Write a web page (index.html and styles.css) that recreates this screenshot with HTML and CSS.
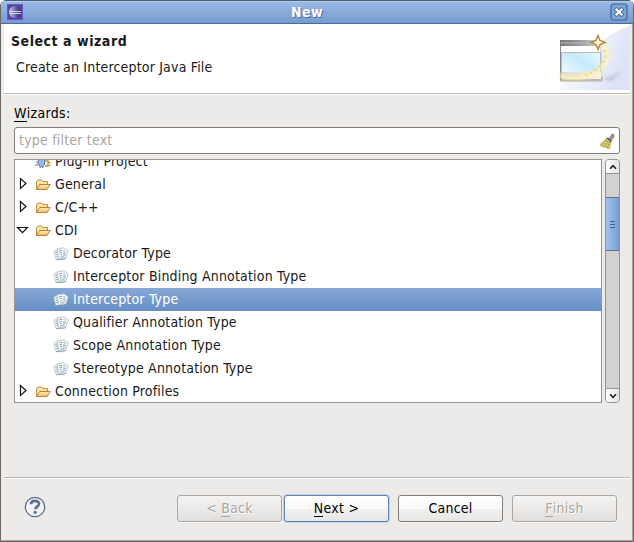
FILE: index.html
```html
<!DOCTYPE html>
<html lang="en">
<head>
<meta charset="utf-8">
<title>New</title>
<link rel="stylesheet" href="styles.css">
</head>
<body>
<svg class="defs" width="0" height="0" aria-hidden="true">
  <defs>
    <linearGradient id="fold" x1="0" y1="0" x2="0" y2="1"><stop offset="0" stop-color="#fff3c4"/><stop offset="1" stop-color="#f0b75c"/></linearGradient>
    <symbol id="folder" viewBox="0 0 16 16">
      <path d="M1.500 12.500V4.500L3 3h3.500L8 4.500h4.500V7" fill="#fbe3a4" stroke="#c08c48"/>
      <path d="M1.500 12.500L4.600 7.500H15.200L12 12.500Z" fill="url(#fold)" stroke="#bd7f33" stroke-linejoin="round"/>
    </symbol>
    <symbol id="pages" viewBox="0 0 16 16">
      <path d="M.8 5.200L4.500 3.300 7.500 13 3 13.600z" fill="#edf3f5" stroke="#b5c6cf" stroke-width=".8"/>
      <path d="M4.200 2.800L11 1.800l4.200 3-2.400 7.400-7.200.5z" fill="#f8fbfc" stroke="#a9bbc5" stroke-width=".8"/>
      <path d="M3 13.600l7.500 0 2.500-1.400" fill="none" stroke="#8199a6" stroke-width=".8"/>
      <path d="M6 4.800l3-.5M10.500 4.500l2 .8M6.500 6.800l2.500-.3M10 7l3 .4M7 8.900l2-.2M10 9l2.300.3M7.300 10.900h4M2.500 6.500l1.500-.5M3 8.500l1.500-.4M3.500 10.700l1.500-.3" stroke="#8298a5" stroke-width=".9"/>
    </symbol>
    <symbol id="closed" viewBox="0 0 9 13"><path d="M1.500 1.500v10L7 6.500z" fill="#fff" stroke="#111" stroke-width="1.200"/></symbol>
    <symbol id="open" viewBox="0 0 13 9"><path d="M1.500 1.500h10l-5 5.200z" fill="#fff" stroke="#111" stroke-width="1.200"/></symbol>
  </defs>
</svg>
<div class="window">
  <div class="titlebar">
    <svg class="app-icon" viewBox="0 0 16 16">
      <defs><linearGradient id="orb" x1="0" x2="1"><stop offset="0" stop-color="#d8d4f0"/><stop offset=".45" stop-color="#7a73b4"/><stop offset="1" stop-color="#2a2158"/></linearGradient></defs>
      <rect width="16" height="16" rx="1" fill="#5345a5"/><rect x=".5" y=".5" width="15" height="15" fill="none" stroke="#6957c5"/>
      <circle cx="8" cy="8" r="6" fill="url(#orb)"/>
      <path d="M4 7.500h10M4 9.500h10" stroke="#d5d0ef"/>
    </svg>
    <div class="title">New</div>
    <svg class="close" viewBox="0 0 18 18">
      <rect x="1" y="1" width="16" height="16" rx="2.500" fill="#7fa3d4" stroke="#40659b" stroke-width="1.200"/>
      <path d="M6.500 6.500l5 5M11.500 6.500l-5 5" stroke="#4a6da3" stroke-width="4" stroke-linecap="square"/>
      <path d="M6.500 6.500l5 5M11.500 6.500l-5 5" stroke="#fff" stroke-width="2.200" stroke-linecap="square"/>
    </svg>
  </div>
  <div class="header">
    <div class="heading">
      <h1>Select a wizard</h1>
      <p>Create an Interceptor Java File</p>
    </div>
    <svg class="banner" viewBox="0 0 76 66">
      <defs>
        <linearGradient id="bg" x1="0" y1="0" x2="1" y2=".4"><stop offset=".15" stop-color="#fff"/><stop offset="1" stop-color="#dce3f6"/></linearGradient>
        <linearGradient id="bar" x1="0" x2="1"><stop offset="0" stop-color="#777"/><stop offset=".55" stop-color="#a0a0a0"/><stop offset="1" stop-color="#ddd"/></linearGradient>
        <linearGradient id="frame" x1="0" x2="1"><stop offset="0" stop-color="#888"/><stop offset="1" stop-color="#c9c5b4"/></linearGradient>
        <linearGradient id="pane" x1="0" y1="1" x2="1" y2="0"><stop offset="0" stop-color="#f9fdff"/><stop offset=".6" stop-color="#c5e9fb"/><stop offset="1" stop-color="#effaf9"/></linearGradient>
        <linearGradient id="strip" x1="0" x2="1"><stop offset="0" stop-color="#dcd8cc"/><stop offset="1" stop-color="#f8f4df"/></linearGradient>
        <filter id="soft" x="-30%" y="-30%" width="160%" height="160%"><feGaussianBlur stdDeviation="1.800"/></filter>
      </defs>
      <path d="M76 2Q52 10 40 26Q20 48 4 66H76Z" fill="url(#bg)"/>
      <path d="M48 56l20-9-10 10z" fill="#aaaabc" opacity=".5" filter="url(#soft)"/>
      <rect x="6.500" y="18" width="40.500" height="38" fill="#fff" stroke="url(#frame)"/>
      <rect x="6" y="16" width="41" height="6" fill="url(#bar)"/>
      <path d="M7 19h35" stroke="#bbb"/>
      <rect x="7.500" y="28.500" width="39" height="27" fill="url(#pane)" stroke="#b9b9b5"/>
      <rect x="8" y="48" width="39" height="7" fill="url(#strip)"/>
      <path d="M49 21C61 30 50 49 27 54Q13 57 5 50" fill="none" stroke="#fff6b8" stroke-width="5" opacity=".7" filter="url(#soft)"/>
      <path d="M48 52.500V57H6" fill="none" stroke="#aaa79d"/>
      <path d="M50 26C55 35 46 46 30 52" fill="none" stroke="#f2dc94" stroke-width="2.500" stroke-dasharray="3 2.500"/>
      <path d="M44 11.500l2 5 5 2-5 2-2 5-2-5-5-2 5-2z" fill="#fffbe8" stroke="#b98a37" stroke-width="1.500"/>
    </svg>
  </div>
  <div class="content">
    <label class="caption"><u>W</u>izards:</label>
    <div class="filter"><span>type filter text</span>
      <svg viewBox="0 0 16 16">
        <path d="M10.500 5L13 1l2 .5V4l-2.500 3z" fill="#b08d75" stroke="#806b60" stroke-width=".6"/>
        <path d="M9 4.500l4 3-1 2-5-4z" fill="#4b5687"/>
        <path d="M7.500 5.500l4.500 4L10.500 16 7 14.500 1.500 13 1 11.500z" fill="#d9cf70" stroke="#a39a48" stroke-width=".6"/>
        <path d="M7.500 7L3 12M9 8l-4 6M10.500 9L8 15" stroke="#777124" stroke-dasharray="1 1"/>
      </svg>
    </div>
    <div class="browser">
      <div class="tree">
        <div class="row"><i class="arrow"></i>
          <svg class="icon" viewBox="0 0 16 16"><path d="M4 5v6H0M1 8h4" stroke="#6384b8" fill="none"/><path d="M3 7l2-2V3l1.500 2L8 3v2l1.500 1v5L8 12v2l-1.500-2L5 14v-2l-2-2z" fill="#9eb8dd" stroke="#5678ab" stroke-width=".9"/><path d="M10 7h3v1.500h2.500M13 8v3.500h2.500M10 12h3" fill="none" stroke="#c49635" stroke-width="1.400"/></svg>
          <span>Plug-in Project</span></div>
        <div class="row"><i class="arrow"><svg class="closed"><use href="#closed"/></svg></i><svg class="icon"><use href="#folder"/></svg><span>General</span></div>
        <div class="row"><i class="arrow"><svg class="closed"><use href="#closed"/></svg></i><svg class="icon"><use href="#folder"/></svg><span>C/C++</span></div>
        <div class="row"><i class="arrow"><svg class="open"><use href="#open"/></svg></i><svg class="icon"><use href="#folder"/></svg><span>CDI</span></div>
        <div class="row child"><svg class="icon"><use href="#pages"/></svg><span>Decorator Type</span></div>
        <div class="row child"><svg class="icon"><use href="#pages"/></svg><span>Interceptor Binding Annotation Type</span></div>
        <div class="row child selected"><svg class="icon"><use href="#pages"/></svg><span>Interceptor Type</span></div>
        <div class="row child"><svg class="icon"><use href="#pages"/></svg><span>Qualifier Annotation Type</span></div>
        <div class="row child"><svg class="icon"><use href="#pages"/></svg><span>Scope Annotation Type</span></div>
        <div class="row child"><svg class="icon"><use href="#pages"/></svg><span>Stereotype Annotation Type</span></div>
        <div class="row"><i class="arrow"><svg class="closed"><use href="#closed"/></svg></i><svg class="icon"><use href="#folder"/></svg><span>Connection Profiles</span></div>
      </div>
      <div class="scrollbar">
        <div class="step"><svg viewBox="0 0 8 6"><path d="M1 4.700L4 1.700l3 3" fill="none" stroke="#222" stroke-width="1.600"/></svg></div>
        <div class="track"><div class="thumb"><i></i><i></i><i></i></div></div>
        <div class="step"><svg viewBox="0 0 8 6"><path d="M1 1.300l3 3 3-3" fill="none" stroke="#222" stroke-width="1.600"/></svg></div>
      </div>
    </div>
  </div>
  <div class="footer">
    <svg class="help" viewBox="0 0 22 22"><circle cx="11" cy="11" r="9.700" fill="#f3f3f4" stroke="#5b7091" stroke-width="1.300"/><path d="M7 8.300C7 3.800 15 3.800 15 8c0 2.500-3.700 2.700-3.700 5.300" fill="none" stroke="#5b7091" stroke-width="2.600"/><circle cx="11.200" cy="16.300" r="1.600" fill="#5b7091"/></svg>
    <button class="btn" disabled><span>&lt; <u>B</u>ack</span></button>
    <button class="btn default"><span><u>N</u>ext &gt;</span></button>
    <button class="btn cancel"><span>Cancel</span></button>
    <button class="btn finish" disabled><span><u>F</u>inish</span></button>
  </div>
</div>
</body>
</html>
```
FILE: styles.css
```css
* { box-sizing: border-box; }
body { margin: 0; background: #fff; color: #1a1a1a; font: 14px/23px "DejaVu Sans Condensed", "DejaVu Sans", sans-serif; font-stretch: condensed; letter-spacing: .18px; }
.defs { position: absolute; }
svg { display: block; flex: none; }
u { text-decoration: none; box-shadow: 0 1px currentColor; display: inline-block; line-height: 15px; }
.window { width: 634px; height: 542px; background: #edebe9; border: 1px solid #6b6763; border-top: 0; border-radius: 6px 6px 0 0; overflow: hidden; display: flex; flex-direction: column; box-shadow: inset -1px -1px #a8a4a0; }
.titlebar { height: 24px; flex: none; display: flex; align-items: center; padding: 0 5px 0 6px; background: linear-gradient(#9cbce7, #769bd0); border-top: 1px solid #4d5e78; border-bottom: 1px solid #4a6b9d; box-shadow: inset 0 1px #b2caeb; }
.app-icon { width: 16px; height: 16px; }
.close { width: 18px; height: 18px; }
.title { flex: 1; text-align: center; color: #fff; font-weight: bold; font-size: 14px; letter-spacing: .5px; line-height: 22px; text-shadow: 1px 1px #496b9c; padding-right: 19px; }
.header { height: 70px; flex: none; margin: 0 3px; display: flex; justify-content: space-between; background: #fff; border-bottom: 1px solid #b9b6b3; box-shadow: 0 1px #fff; }
.heading { padding: 6px 0 0 7px; }
h1 { margin: 0; font-size: 14px; line-height: 23px; letter-spacing: .53px; }
.heading p { margin: 3px 0 0 5px; }
.banner { width: 76px; height: 66px; }
.content { flex: 1; padding: 8px 13px 0; }
.caption { display: block; height: 25px; line-height: 22px; color: #000; letter-spacing: .3px; }
.filter { height: 27px; display: flex; align-items: center; justify-content: space-between; padding: 0 4px; background: #fff; border: 1px solid #807c78; border-radius: 3px; color: #aaa6a2; letter-spacing: .2px; }
.filter svg { width: 16px; height: 16px; }
.browser { display: flex; gap: 3px; margin-top: 5px; height: 244px; }
.tree { width: 588px; border: 1px solid #969390; background: #fff; overflow: hidden; display: flex; flex-direction: column; justify-content: flex-end; }
.row { height: 23px; flex: none; display: flex; align-items: center; }
.row span { margin-left: 4px; }
.tree .row:last-child { margin-bottom: -1px; }
.icon { width: 16px; height: 16px; }
.arrow { width: 20px; display: flex; padding-left: 3px; }
.closed { width: 9px; height: 13px; margin: -2px 0 0 1px; }
.open { width: 13px; height: 9px; margin: -1px 0 0 -2px; }
.child { padding-left: 38px; }
.selected { color: #fff; background: linear-gradient(#86a8d8, #678fc3); }
.scrollbar { width: 15px; display: flex; flex-direction: column; border: 1px solid #969390; border-radius: 4px; overflow: hidden; background: #d4d2d0; }
.step { height: 14px; display: flex; align-items: center; justify-content: center; background: linear-gradient(90deg, #fff, #e7e5e3); border-bottom: 1px solid #969390; }
.step:last-child { border-bottom: 0; border-top: 1px solid #969390; }
.step svg { width: 8px; height: 6px; }
.track { flex: 1; padding-top: 23px; }
.thumb { height: 54px; margin: 0 -1px; border: 1px solid #4e73a7; background: linear-gradient(90deg, #a6c2e9, #779ed3); display: flex; flex-direction: column; align-items: center; justify-content: center; gap: 2px; }
.thumb i { width: 5px; height: 1px; background: #3e639a; }
.footer { height: 64px; flex: none; margin: 0 3px; padding: 17px 13px 0 21px; display: flex; border-top: 1px solid #b9b6b3; box-shadow: inset 0 1px #fff; }
.help { width: 22px; height: 22px; margin: 1px 131px 0 -1px; }
.btn { width: 105px; height: 27px; margin: 0 2px 0 0; padding: 0; flex: none; border: 1px solid #807c78; border-radius: 3px; background: linear-gradient(#fff, #fafafa 50%, #f1f0ef 52%, #e9e7e5); color: #000; font: inherit; letter-spacing: .25px; line-height: 23px; box-shadow: 0 1px #f8f7f6; }
.default { border-color: #5d83b9; box-shadow: 0 0 0 1px #c5d2e4; margin-right: 9px; }
.cancel { margin-right: 9px; }
.finish { margin-right: 0; }
.btn:disabled { color: #aaa6a2; border-color: #aaa7a4; background: linear-gradient(#f5f4f3, #e1dfdd); text-shadow: 1px 1px #fff; }
```
